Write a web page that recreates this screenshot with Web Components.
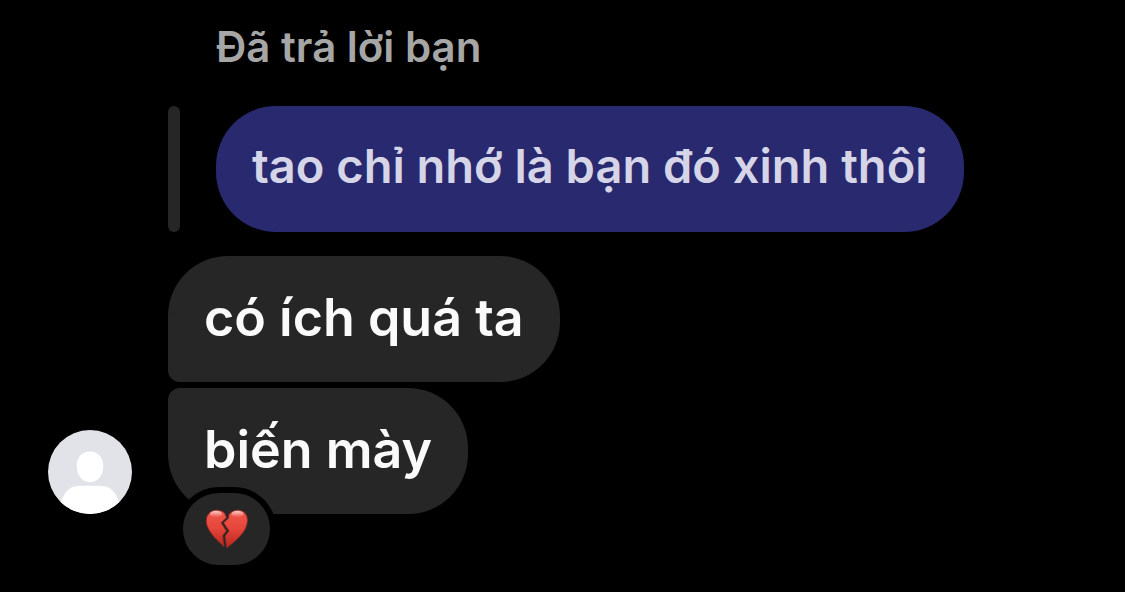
<!DOCTYPE html>
<html lang="vi">
<head>
<meta charset="utf-8">
<meta name="viewport" content="width=device-width, initial-scale=1">
<title>Tin nhắn</title>
<style>
  body { margin: 0; background: #000; font-family: Inter, "Noto Sans", sans-serif; }
</style>
</head>
<body>
<chat-thread>
  <user-avatar slot="avatar"></user-avatar>
  <reply-quote>
    <span slot="label">Đã trả lời bạn</span>
    <chat-bubble kind="quoted">tao chỉ nhớ là bạn đó xinh thôi</chat-bubble>
  </reply-quote>
  <chat-bubble place="first">có ích quá ta</chat-bubble>
  <chat-bubble place="last">biến mày<message-reaction slot="reaction"></message-reaction></chat-bubble>
</chat-thread>

<script>
class ShadowElement extends HTMLElement {
  constructor() {
    super();
    this.attachShadow({ mode: 'open' }).innerHTML = this.constructor.markup;
  }
}

customElements.define('chat-thread', class extends ShadowElement {
  static markup = `
    <style>
      :host { display: block; }
      main { display: flex; align-items: flex-end; gap: 36px; padding: 22px 48px 78px; }
      .messages { display: flex; flex: 1; min-width: 0; flex-direction: column; align-items: flex-start; gap: 6px; }
    </style>
    <main>
      <slot name="avatar"></slot>
      <div class="messages"><slot></slot></div>
    </main>`;
});

customElements.define('user-avatar', class extends ShadowElement {
  static markup = `
    <style>
      :host { display: block; flex: none; width: 84px; height: 84px; border-radius: 50%; overflow: hidden; background: #e2e3e8; }
      svg { display: block; width: 100%; height: 100%; }
    </style>
    <svg viewBox="0 0 84 84" fill="#fff" role="img" aria-label="Ảnh đại diện">
      <path d="M42 21.500c8 0 13.300 6 13.300 14.500C55.300 45 50 52.200 42 52.200S28.700 45 28.700 36C28.700 27.500 34 21.500 42 21.500Z"/>
      <path d="M11 84C12 66 20 55.700 31 55.700H53C64 55.700 72 66 73 84Z"/>
    </svg>`;
});

customElements.define('reply-quote', class extends ShadowElement {
  static markup = `
    <style>
      :host { display: block; max-width: 100%; margin-bottom: 18px; }
      .label { margin: 0 0 34px 48px; font-size: 42px; line-height: 50px; font-weight: 600; color: #a6a6a6; }
      .quote { display: flex; gap: 36px; }
      .bar { flex: none; width: 12px; border-radius: 6px; background: #262626; }
    </style>
    <div class="label"><slot name="label"></slot></div>
    <div class="quote"><div class="bar"></div><slot></slot></div>`;
});

customElements.define('chat-bubble', class extends ShadowElement {
  static markup = `
    <style>
      :host {
        display: block; position: relative; box-sizing: border-box; max-width: 100%;
        padding: 34px 36px 36px; border-radius: 60px;
        background: #262626; color: #fafafa;
        font-size: 52px; line-height: 56px; font-weight: 600;
      }
      :host([kind="quoted"]) { padding: 32px 36px 38px; background: #29296f; color: #d6d5e8; font-size: 47px; }
      :host([place="first"]) { border-bottom-left-radius: 12px; }
      :host([place="last"]) { border-top-left-radius: 12px; }
    </style>
    <slot></slot><slot name="reaction"></slot>`;
});

customElements.define('message-reaction', class extends ShadowElement {
  static markup = `
    <style>
      :host { display: block; position: absolute; left: 9px; bottom: -57px; }
      button {
        display: flex; align-items: center; justify-content: center; box-sizing: border-box;
        width: 99px; height: 84px; margin: 0; padding: 0;
        border: 6px solid #000; border-radius: 42px; background: #262626;
      }
      svg { display: block; width: 44px; height: 44px; }
    </style>
    <button type="button" aria-label="Trái tim tan vỡ">
      <svg viewBox="0 0 44 44">
        <defs>
          <linearGradient id="red" x1="0" y1="0" x2="0" y2="1">
            <stop offset="0" stop-color="#f0584d"/>
            <stop offset=".5" stop-color="#e5453a"/>
            <stop offset="1" stop-color="#b8261d"/>
          </linearGradient>
          <linearGradient id="shine" x1="0" y1="0" x2="0" y2="1">
            <stop offset="0" stop-color="#fff" stop-opacity=".7"/>
            <stop offset="1" stop-color="#fff" stop-opacity="0"/>
          </linearGradient>
        </defs>
        <path fill="url(#red)" stroke="#9c2a24" stroke-width=".8" d="M19.500 6C16 2.500 9.500 2.300 5.500 5C1 8.500 .3 14.500 2.600 20C5.500 27 12 33 19 39.500L17.600 28.500L21.300 24L16 15.800L21.300 10.500Z"/>
        <path fill="url(#red)" stroke="#9c2a24" stroke-width=".8" d="M24 7.500C27.500 2.800 34 2 38.700 5C43 8.500 43.300 14.500 40.800 20.500C38 27.500 30 34.500 21.800 40.700L20.200 29L24.200 24L18.700 15.800L23.800 11Z"/>
        <ellipse cx="11" cy="7" rx="6" ry="3.200" fill="url(#shine)"/>
        <ellipse cx="32.500" cy="7" rx="6" ry="3.200" fill="url(#shine)"/>
      </svg>
    </button>`;
});
</script>
</body>
</html>
